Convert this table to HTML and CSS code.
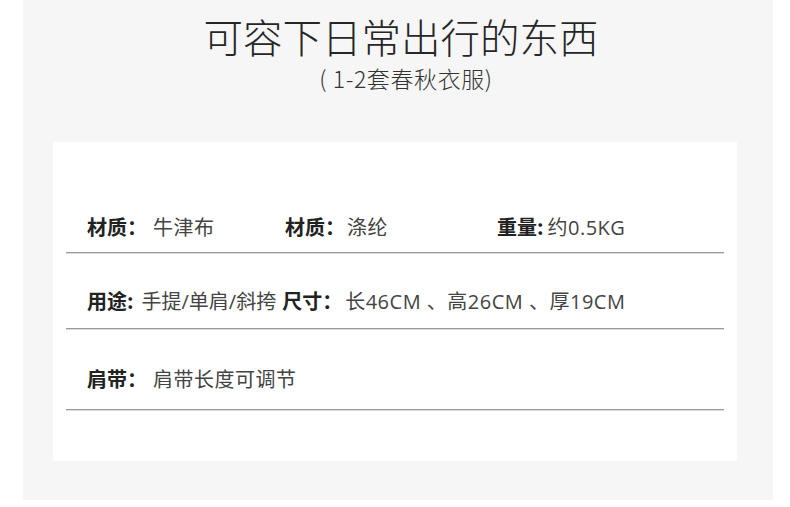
FILE: index.html
```html
<!DOCTYPE html>
<html lang="zh">
<head>
<meta charset="utf-8">
<title>可容下日常出行的东西</title>
<link rel="stylesheet" href="styles.css">
</head>
<body>
<div class="panel">
  <header class="head">
    <h1 class="title">可容下日常出行的东西</h1>
    <p class="subtitle">( 1-2套春秋衣服)</p>
  </header>
  <section class="card">
    <div class="row row-1">
      <div class="cell cell-a"><b class="label">材质：</b><span class="value gap">牛津布</span></div>
      <div class="cell cell-b"><b class="label">材质：</b><span class="value gap">涤纶</span></div>
      <div class="cell"><b class="label">重量:</b><span class="value gap-s">约0.5KG</span></div>
    </div>
    <div class="row row-2">
      <div class="cell"><b class="label">用途:</b><span class="value gap-u">手提/单肩/斜挎</span><b class="label gap-m">尺寸：</b><span class="value gap-t">长46CM 、高26CM 、厚19CM</span></div>
    </div>
    <div class="row row-3">
      <div class="cell"><b class="label">肩带：</b><span class="value gap">肩带长度可调节</span></div>
    </div>
  </section>
</div>
</body>
</html>
```

FILE: styles.css
```css
* { box-sizing: border-box; margin: 0; padding: 0; }
html, body { background: #ffffff; }
body {
  font-family: "Noto Sans CJK SC", "Noto Sans", sans-serif;
  color: #333;
}
.panel {
  margin-left: 23px;
  width: 750px;
  height: 500px;
  background: #f6f6f6;
  padding: 0 36px 0 30px;
}
.head {
  text-align: center;
  height: 142px;
  padding-top: 16px;
  padding-left: 12px;
}
.title {
  font-size: 39.5px;
  font-weight: 300;
  line-height: 40px;
  color: #262626;
}
.subtitle {
  font-size: 23px;
  font-weight: 300;
  line-height: 26px;
  letter-spacing: 0.6px;
  color: #333;
  margin-top: 9px;
  padding-left: 10px;
}
.card {
  background: #fff;
  height: 319px;
  padding: 0 13px;
}
.row {
  display: flex;
  align-items: flex-end;
  border-bottom: 1px solid #9a9a9a;
  box-shadow: 0 1px 0 #dcdcdc;
  padding-left: 21px;
  font-size: 20px;
  line-height: 26px;
}
.row-1 { height: 111px; padding-bottom: 11px; }
.row-2 { height: 76px; padding-bottom: 13px; }
.row-3 { height: 81px; padding-bottom: 16px; }
.cell { white-space: nowrap; }
.cell-a { width: 198px; }
.cell-b { width: 212px; }
.label { font-weight: 700; color: #222; }
.value {
  font-family: "Open Sans", "Noto Sans CJK SC", sans-serif;
  font-weight: 400;
  color: #444;
  letter-spacing: 0.5px;
}
.gap { margin-left: 6px; }
.cell-b .gap { margin-left: 2px; }
.gap-s { margin-left: 4px; }
.gap-u { margin-left: 8px; letter-spacing: 0; }
.gap-m { margin-left: 6px; }
.gap-t { margin-left: 3px; }
```
